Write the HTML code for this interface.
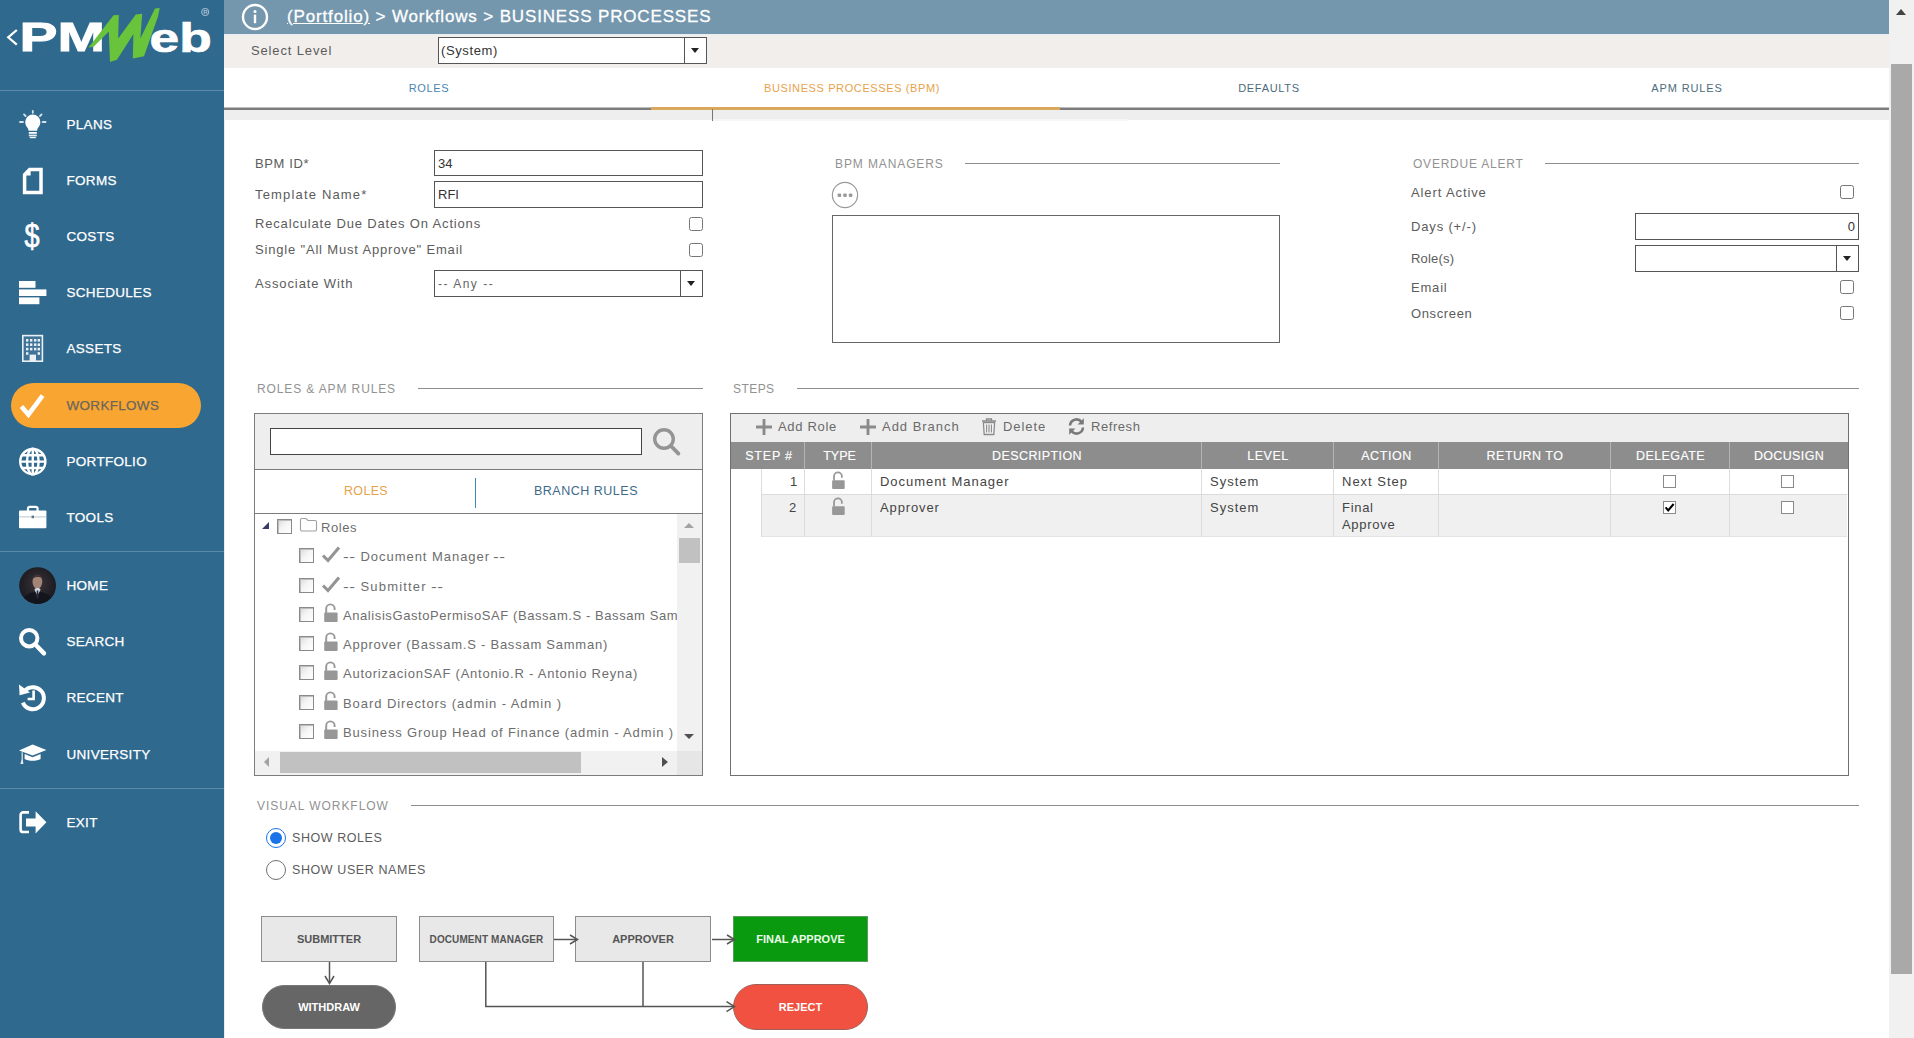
<!DOCTYPE html>
<html><head>
<meta charset="utf-8">
<title>PMWeb - Business Processes</title>
<style>
*{box-sizing:border-box;margin:0;padding:0}
html,body{width:1914px;height:1038px;overflow:hidden;background:#fff}
body{font-family:"Liberation Sans",sans-serif;font-size:13px;color:#5a5a5a;position:relative}
.abs{position:absolute}
#side{position:absolute;left:0;top:0;width:224px;height:1038px;background:#30698e}
.sep{position:absolute;left:0;width:224px;height:1px;background:#5d8aa8}
.nav{z-index:2;position:absolute;left:66.5px;-webkit-text-stroke:.25px #fff;color:#fff;font-size:13.5px;letter-spacing:.3px;line-height:16px;white-space:nowrap}
.ico{position:absolute;z-index:2}
#hdr{position:absolute;left:224px;top:0;width:1665px;height:34px;background:#7497ad;z-index:1;border-bottom:0}
#lvl{position:absolute;left:224px;top:33px;width:1665px;height:35px;background:#f1eeeb}
#tabs{position:absolute;left:224px;top:68px;width:1665px;height:42px;background:#fff}
.tab{position:absolute;top:82px;font-size:11px;letter-spacing:.75px;line-height:12px;white-space:nowrap;transform:translateX(calc(-50% + 1px))}
.lbl{position:absolute;font-size:13px;letter-spacing:.55px;line-height:16px;color:#5c5c5c;white-space:nowrap}
.sec{position:absolute;font-size:12px;letter-spacing:.75px;line-height:14px;color:#929292;white-space:nowrap}
.hr{position:absolute;height:1px;background:#8e8e8e}
.inp{position:absolute;border:1px solid #555;background:#fff;font-size:13px;color:#333;line-height:26px;padding-left:3px;white-space:nowrap;overflow:hidden}
.cb{position:absolute;width:14px;height:14px;border:1px solid #767676;border-radius:2.5px;background:#fff}
.dd{position:absolute;width:0;height:0;border-left:4.5px solid transparent;border-right:4.5px solid transparent;border-top:5px solid #222}

.tcb{position:absolute;width:15px;height:15px;border:1px solid #8a8a8a;background:linear-gradient(135deg,#d9d9d9 0%,#f4f4f4 45%,#fff 100%);box-shadow:inset 1px 1px 0 #bdbdbd}
.tl{position:absolute;font-size:13px;letter-spacing:.6px;line-height:16px;color:#6e6e6e;white-space:nowrap}

.tb{position:absolute;top:419px;font-size:13px;letter-spacing:.6px;line-height:16px;color:#6a6a6a;white-space:nowrap}
.th{-webkit-text-stroke:.15px #fff;position:absolute;top:449px;font-size:12.5px;letter-spacing:.45px;line-height:14px;color:#fff;white-space:nowrap;transform:translateX(calc(-50% + 1px))}
.td{position:absolute;font-size:13px;letter-spacing:.7px;line-height:17px;color:#444;white-space:nowrap}
.vl{position:absolute;width:1px}
.gcb{position:absolute;width:13px;height:13px;border:1px solid #8a8a8a;background:#fff}
.fb{position:absolute;border:1px solid #8c8c8c;background:#e8e8e8;font-size:10.5px;font-weight:bold;color:#555;text-align:center;white-space:nowrap}
.ds{transform:scaleX(1.33);transform-origin:0 50%;letter-spacing:.3px}
</style>
</head>
<body>

<!-- ================= SIDEBAR ================= -->
<div id="side">
  
  <!-- logo -->
  <svg class="abs" style="left:0;top:0" width="224" height="90" viewBox="0 0 224 90">
    <path d="M16.8 30 L8.2 37.3 L16.8 44.6" fill="none" stroke="#fff" stroke-width="2.2"></path>
    <text x="0" y="0" transform="translate(19.6,51.3) scale(1.39,1)" font-family="Liberation Sans" font-weight="bold" font-size="41" fill="#fff" stroke="#fff" stroke-width=".9">PM</text>
    <text x="0" y="0" transform="translate(149.5,51.6) scale(1.3,1)" font-family="Liberation Sans" font-weight="bold" font-size="41" fill="#fff" stroke="#fff" stroke-width=".7">eb</text>
    <path d="M88.6 47.4 L113.5 15.2 L118.8 15 L118.2 38.6 L135.8 14.6 L142.2 13.8 L140.4 38.6 L155 8.4 L159.7 8 L158 16.4 L144 56.2 L132.8 58.5 L133.4 34 L117 59.7 L110 62 L108.8 31.6 L93.6 46.8 Z" fill="#69c33b"></path>
    <circle cx="205.2" cy="12" r="3.6" fill="none" stroke="#a9c3d6" stroke-width="1"></circle>
    <text x="203.2" y="14.2" font-family="Liberation Sans" font-weight="bold" font-size="6" fill="#a9c3d6">R</text>
  </svg>
  <!-- plans: bulb -->
  <svg class="ico" style="left:17px;top:108px" width="32" height="32" viewBox="0 0 32 32">
    <path d="M15.8 6.6 a7.6 7.6 0 0 1 7.6 7.6 c0 3 -1.8 4.6 -2.8 6.4 l-0.6 2.2 h-8.4 l-0.6 -2.2 c-1 -1.8 -2.8 -3.4 -2.8 -6.4 a7.6 7.6 0 0 1 7.6 -7.6 z" fill="#fff"></path>
    <rect x="11.8" y="24" width="8" height="1.8" fill="#fff"></rect><rect x="11.8" y="26.6" width="8" height="1.8" fill="#e4ecf2"></rect><rect x="12.8" y="29" width="6" height="1.2" fill="#fff"></rect>
    <g stroke="#d5e3ee" stroke-width="1.8" stroke-linecap="round"><path d="M15.8 3 V4.8"></path><path d="M7 6.4 L8.6 8"></path><path d="M24.6 6.4 L23 8"></path><path d="M3 14 H6"></path><path d="M25.6 14 H28.6"></path></g>
  </svg>
  <!-- forms: doc -->
  <svg class="ico" style="left:20px;top:165px" width="26" height="32" viewBox="0 0 26 32">
    <path d="M9.6 4.6 H21 V27.4 H4.6 V9.8 Z" fill="none" stroke="#fff" stroke-width="3.5" stroke-linejoin="miter"></path>
    <path d="M4.6 10.6 H10.6 V4.6 Z" fill="#fff"></path>
  </svg>
  <!-- costs: $ -->
  <div class="ico" style="left:20px;top:216px;width:24px;color:#fff;font-size:33px;line-height:40px;font-weight:normal;text-align:center;-webkit-text-stroke:.7px #fff;transform:scaleX(.82)">$</div>
  <!-- schedules -->
  <svg class="ico" style="left:17px;top:278px" width="32" height="30" viewBox="0 0 32 30">
    <rect x="2" y="3" width="16.5" height="6.8" fill="#fff"></rect><rect x="2" y="11.4" width="27.4" height="6.6" fill="#fff"></rect><rect x="2" y="19.4" width="20.4" height="6.8" fill="#fff"></rect>
  </svg>
  <!-- assets: building -->
  <svg class="ico" style="left:20px;top:333px" width="26" height="30" viewBox="0 0 26 30">
    <rect x="2.8" y="2.6" width="19.6" height="25.6" fill="#3f7398" stroke="#e8f0f6" stroke-width="1.6"></rect>
    <g fill="#e8f0f6"><rect x="6" y="6" width="2.4" height="2.6"></rect><rect x="10" y="6" width="2.4" height="2.6"></rect><rect x="14" y="6" width="2.4" height="2.6"></rect><rect x="17.6" y="6" width="2.4" height="2.6"></rect>
    <rect x="6" y="10.4" width="2.4" height="2.6"></rect><rect x="10" y="10.4" width="2.4" height="2.6"></rect><rect x="14" y="10.4" width="2.4" height="2.6"></rect><rect x="17.6" y="10.4" width="2.4" height="2.6"></rect>
    <rect x="6" y="14.8" width="2.4" height="2.6"></rect><rect x="10" y="14.8" width="2.4" height="2.6"></rect><rect x="14" y="14.8" width="2.4" height="2.6"></rect><rect x="17.6" y="14.8" width="2.4" height="2.6"></rect>
    <rect x="6" y="19.2" width="2.4" height="2.6"></rect><rect x="17.6" y="19.2" width="2.4" height="2.6"></rect>
    <rect x="9.6" y="21.6" width="6.4" height="6.6"></rect></g>
  </svg>
  <!-- workflows: check -->
  <svg class="ico" style="left:17px;top:390px" width="32" height="32" viewBox="0 0 32 32">
    <path d="M4.4 16.6 L11.4 24.6 L25.6 5.6" fill="none" stroke="#fff" stroke-width="4.6" stroke-linejoin="miter"></path>
  </svg>
  <!-- portfolio: globe -->
  <svg class="ico" style="left:17px;top:446px" width="32" height="32" viewBox="0 0 32 32">
    <g fill="none" stroke="#fff" stroke-width="2.4"><circle cx="15.8" cy="15.6" r="12.6"></circle><ellipse cx="15.8" cy="15.6" rx="5.8" ry="12.8"></ellipse><path d="M15.8 2.8 V28.4 M3 15.6 H28.6 M5 9.2 H26.6 M5 22 H26.6"></path></g>
  </svg>
  <!-- tools: briefcase -->
  <svg class="ico" style="left:17px;top:503px" width="32" height="28" viewBox="0 0 32 28">
    <path d="M11 8 V5.6 a1.8 1.8 0 0 1 1.8 -1.8 h6 a1.8 1.8 0 0 1 1.8 1.8 V8" fill="none" stroke="#fff" stroke-width="2.2"></path>
    <rect x="2" y="7.6" width="27.4" height="17.6" rx="1" fill="#fff"></rect>
    <rect x="2" y="13.4" width="27.4" height="1" fill="#b9c6cf"></rect><rect x="14.6" y="12.6" width="2.4" height="2.6" fill="#5c7586"></rect>
  </svg>
  <!-- home avatar -->
  <svg class="ico" style="left:18px;top:566px" width="40" height="40" viewBox="0 0 40 40">
    <defs><clipPath id="av"><circle cx="19.6" cy="19.6" r="18.4"></circle></clipPath><radialGradient id="avg" cx="50%" cy="45%" r="60%"><stop offset="0" stop-color="#3a3338"></stop><stop offset="1" stop-color="#16171d"></stop></radialGradient></defs>
    <circle cx="19.6" cy="19.6" r="18.4" fill="url(#avg)"></circle>
    <g clip-path="url(#av)">
      <path d="M3 40 C5 28 12 26 19.6 26 C27 26 34 28 36 40 Z" fill="#14151c"></path>
      <ellipse cx="19.4" cy="15.8" rx="4.9" ry="7" fill="#a48474"></ellipse>
      <path d="M14.6 12.6 C15 7.6 23.6 7.4 24.2 12.4 C22 10.4 17 10.4 14.6 12.6 Z" fill="#3c3436"></path>
      <path d="M16.4 23.6 L19.4 30 L22.6 23.6 L21 22 H18 Z" fill="#cfd3da"></path>
      <path d="M18.8 24.6 H20.2 L20.8 31 L19.4 33 L18.2 31 Z" fill="#242a3c"></path>
    </g>
  </svg>
  <!-- search -->
  <svg class="ico" style="left:17px;top:626px" width="32" height="32" viewBox="0 0 32 32">
    <circle cx="12.2" cy="12.2" r="8.2" fill="none" stroke="#fff" stroke-width="4"></circle>
    <path d="M18.6 18.8 L27 27.4" stroke="#fff" stroke-width="4.4" stroke-linecap="round"></path>
  </svg>
  <!-- recent -->
  <svg class="ico" style="left:17px;top:681px" width="32" height="32" viewBox="0 0 32 32">
    <path d="M7.2 10.4 A11 11 0 1 1 5.8 21.6" fill="none" stroke="#fff" stroke-width="4"></path>
    <path d="M2 3.4 L2.6 14.2 L13 11.4 Z" fill="#fff"></path>
    <path d="M16.6 9.6 V18 H10.6" fill="none" stroke="#fff" stroke-width="2.6"></path>
  </svg>
  <!-- university -->
  <svg class="ico" style="left:17px;top:742px" width="32" height="26" viewBox="0 0 32 26">
    <path d="M15.6 2.6 L29.4 8 L15.6 13.6 L2 8.6 Z" fill="#fff"></path>
    <path d="M7.6 12 L15.6 15.2 L23.6 12 V17 C20 19.4 11 19.4 7.6 17 Z" fill="#fff"></path>
    <path d="M4.6 10 V17.4 L3.4 22 H6.4 L5.8 17.4 V10.6" fill="#e3ecf3"></path>
  </svg>
  <!-- exit -->
  <svg class="ico" style="left:17px;top:808px" width="32" height="30" viewBox="0 0 32 30">
    <path d="M12 4.4 H6.2 a2.6 2.6 0 0 0 -2.6 2.6 V21.4 a2.6 2.6 0 0 0 2.6 2.6 H12" fill="none" stroke="#fff" stroke-width="2.6"></path>
    <path d="M9 10.4 H18.6 V3.2 L29.4 14.2 L18.6 25.4 V18.4 H9 Z" fill="#fff"></path>
  </svg>
  <div class="sep" style="top:90px"></div>
  <div class="sep" style="top:551px"></div>
  <div class="sep" style="top:788px"></div>

  <div class="nav" style="top:117px">PLANS</div>
  <div class="nav" style="top:173px">FORMS</div>
  <div class="nav" style="top:229px">COSTS</div>
  <div class="nav" style="top:285px">SCHEDULES</div>
  <div class="nav" style="top:341px">ASSETS</div>
  <div class="abs" style="left:11px;top:383px;width:190px;height:45px;border-radius:23px;background:#f9a531"></div>
  <div class="nav" style="top:398px;color:#6b665c;-webkit-text-stroke:.25px #6b665c">WORKFLOWS</div>
  <div class="nav" style="top:454px">PORTFOLIO</div>
  <div class="nav" style="top:510px">TOOLS</div>
  <div class="nav" style="top:578px">HOME</div>
  <div class="nav" style="top:634px">SEARCH</div>
  <div class="nav" style="top:690px">RECENT</div>
  <div class="nav" style="top:747px">UNIVERSITY</div>
  <div class="nav" style="top:815px">EXIT</div>
</div>

<!-- ================= HEADER ================= -->
<div id="hdr">
  <svg class="abs" style="left:16px;top:2px" width="30" height="30" viewBox="0 0 30 30">
    <circle cx="15" cy="15" r="12" fill="none" stroke="#fff" stroke-width="2.4"></circle>
    <circle cx="15" cy="9.6" r="1.5" fill="#fff"></circle>
    <rect x="13.8" y="12.6" width="2.4" height="8.6" fill="#fff"></rect>
  </svg>
  <div class="abs bc" style="left: 63px; top: 6px; font-size: 17px; line-height: 22px; color: rgb(255, 255, 255); letter-spacing: 0.85px; white-space: nowrap; -webkit-text-stroke: 0.3px rgb(255, 255, 255);"><span style="text-decoration:underline">(Portfolio)</span> &gt; Workflows &gt; BUSINESS PROCESSES</div>
</div>
<div id="lvl">
  <div class="lbl" style="left: 27px; top: 10px; letter-spacing: 0.86px;">Select Level</div>
  <div class="inp" style="left: 214px; top: 4px; width: 269px; height: 27px; line-height: 25px; padding-left: 2px; letter-spacing: 0.61px;">(System)</div>
  <div class="abs" style="left:460px;top:5px;width:1px;height:25px;background:#555"></div>
  <div class="dd" style="left:466.5px;top:15px"></div>
</div>
<div class="abs" style="left:224px;top:34px;width:1665px;height:1px;background:#e6eff3;z-index:1"></div>
<div id="tabs">
  <div class="abs" style="left:0;top:39px;width:1665px;height:1px;background:#bdbdbd"></div><div class="abs" style="left:0;top:40px;width:1665px;height:2px;background:#7c7c7c"></div>
  <div class="abs" style="left:427px;top:39px;width:409px;height:3px;background:#d9a85a"></div>
</div>
<div class="tab" style="left: 428px; color: rgb(74, 134, 180); letter-spacing: 0.63px;">ROLES</div>
<div class="tab" style="left: 851px; color: rgb(232, 162, 74); letter-spacing: 0.61px;">BUSINESS PROCESSES (BPM)</div>
<div class="tab" style="left: 1268px; color: rgb(77, 107, 128); letter-spacing: 0.7px;">DEFAULTS</div>
<div class="tab" style="left: 1686px; color: rgb(77, 107, 128); letter-spacing: 0.87px;">APM RULES</div>
<div class="abs" style="left:224px;top:110px;width:1665px;height:10px;background:#eee"></div>
<div class="abs" style="left:712px;top:109px;width:1px;height:12px;background:#777"></div>
<div class="abs" style="left:713px;top:119px;width:415px;height:2px;background:#f6f6f6"></div>

<!-- ================= RIGHT SCROLLBAR ================= -->
<div class="abs" style="left:1889px;top:0;width:25px;height:1038px;background:#f1f1f1"></div>
<div class="abs" style="left:1891px;top:64px;width:21px;height:910px;background:#a9a9a9"></div>
<div class="abs" style="left:1896px;top:9px;width:0;height:0;border-left:5.5px solid transparent;border-right:5.5px solid transparent;border-bottom:6px solid #444"></div>

<div class="abs" style="left:224px;top:120px;width:1px;height:918px;background:#e6eef3"></div>
<!-- ================= FORM LEFT ================= -->
<div class="lbl" style="left: 255px; top: 156px; letter-spacing: 0.63px;">BPM ID*</div>
<div class="inp" style="left:434px;top:150px;width:269px;height:26px">34</div>
<div class="lbl" style="left: 255px; top: 187px; letter-spacing: 1.17px;">Template Name*</div>
<div class="inp" style="left:434px;top:181px;width:269px;height:27px">RFI</div>
<div class="lbl" style="left: 255px; top: 216px; letter-spacing: 0.83px;">Recalculate Due Dates On Actions</div>
<div class="cb" style="left:689px;top:217px"></div>
<div class="lbl" style="left: 255px; top: 242px; letter-spacing: 0.82px;">Single "All Must Approve" Email</div>
<div class="cb" style="left:689px;top:243px"></div>
<div class="lbl" style="left: 255px; top: 276px; letter-spacing: 0.89px;">Associate With</div>
<div class="inp" style="left: 434px; top: 270px; width: 269px; height: 27px; color: rgb(102, 102, 102); font-size: 12px; letter-spacing: 1.5px;">-- Any --</div>
<div class="abs" style="left:680px;top:271px;width:1px;height:25px;background:#555"></div>
<div class="dd" style="left:687px;top:281px"></div>

<!-- ================= BPM MANAGERS ================= -->
<div class="sec" style="left: 835px; top: 157px; letter-spacing: 0.89px;">BPM MANAGERS</div>
<div class="hr" style="left:965px;top:163px;width:315px"></div>
<svg class="abs" style="left:831px;top:181px" width="28" height="28" viewBox="0 0 28 28">
  <circle cx="14" cy="14" r="12.6" fill="#fff" stroke="#9a9a9a" stroke-width="1.2"></circle>
  <rect x="6.6" y="12.4" width="3.6" height="3.6" rx="1" fill="#9a9a9a"></rect>
  <rect x="12.2" y="12.4" width="3.6" height="3.6" rx="1" fill="#9a9a9a"></rect>
  <rect x="17.8" y="12.4" width="3.6" height="3.6" rx="1" fill="#9a9a9a"></rect>
</svg>
<div class="abs" style="left:832px;top:215px;width:448px;height:128px;border:1px solid #666;background:#fff"></div>

<!-- ================= OVERDUE ALERT ================= -->
<div class="sec" style="left: 1413px; top: 157px; letter-spacing: 0.77px;">OVERDUE ALERT</div>
<div class="hr" style="left:1545px;top:163px;width:314px"></div>
<div class="lbl" style="left: 1411px; top: 185px; letter-spacing: 0.89px;">Alert Active</div>
<div class="cb" style="left:1840px;top:185px"></div>
<div class="lbl" style="left: 1411px; top: 219px; letter-spacing: 0.84px;">Days (+/-)</div>
<div class="inp" style="left:1635px;top:213px;width:224px;height:27px;text-align:right;padding-right:3px">0</div>
<div class="lbl" style="left: 1411px; top: 251px; letter-spacing: 0.18px;">Role(s)</div>
<div class="inp" style="left:1635px;top:245px;width:224px;height:27px"></div>
<div class="abs" style="left:1836px;top:246px;width:1px;height:25px;background:#555"></div>
<div class="dd" style="left:1843px;top:256px"></div>
<div class="lbl" style="left: 1411px; top: 280px; letter-spacing: 0.8px;">Email</div>
<div class="cb" style="left:1840px;top:280px"></div>
<div class="lbl" style="left: 1411px; top: 306px; letter-spacing: 0.63px;">Onscreen</div>
<div class="cb" style="left:1840px;top:306px"></div>

<!-- ================= ROLES & APM RULES ================= -->
<div class="sec" style="left: 257px; top: 382px; letter-spacing: 0.88px;">ROLES &amp; APM RULES</div>
<div class="hr" style="left:418px;top:388px;width:285px"></div>
<div class="abs" style="left:254px;top:413px;width:449px;height:363px;border:1px solid #7c7c7c;background:#fff"></div>
<div class="abs" style="left:255px;top:414px;width:447px;height:55px;background:#eee"></div>
<div class="abs" style="left:255px;top:469px;width:447px;height:1px;background:#7c7c7c"></div>
<div class="abs" style="left:270px;top:428px;width:372px;height:27px;border:1px solid #444;background:#fff"></div>
<svg class="abs" style="left:650px;top:425px" width="34" height="34" viewBox="0 0 34 34">
  <circle cx="14" cy="14" r="9.3" fill="none" stroke="#949494" stroke-width="3.4"></circle>
  <line x1="21" y1="21" x2="28.4" y2="28.6" stroke="#949494" stroke-width="3.8" stroke-linecap="round"></line>
</svg>
<div class="abs" style="left:255px;top:513px;width:447px;height:1px;background:#7c7c7c"></div>
<div class="abs" style="left:475px;top:478px;width:1px;height:30px;background:#3f86b8"></div>
<div class="tab" style="left: 365px; top: 484px; font-size: 12.5px; letter-spacing: 0.33px; line-height: 14px; color: rgb(232, 162, 74);">ROLES</div>
<div class="tab" style="left: 585px; top: 484px; font-size: 12.5px; letter-spacing: 0.51px; line-height: 14px; color: rgb(61, 106, 138);">BRANCH RULES</div>
<div class="abs" style="left:255px;top:514px;width:422px;height:237px;overflow:hidden">
<div class="abs" style="left:7px;top:8px;width:0;height:0;border-left:7px solid transparent;border-bottom:7px solid #3b3b6b"></div>
<div class="tcb" style="left:22px;top:5px"></div>
<svg class="abs" style="left:44px;top:3px" width="19" height="16" viewBox="0 0 19 16"><path d="M1.5 3 a1.5 1.5 0 0 1 1.5 -1.5 h4 l2 2 h7 a1.5 1.5 0 0 1 1.5 1.5 v7.5 a1.5 1.5 0 0 1 -1.5 1.5 h-13 a1.5 1.5 0 0 1 -1.5 -1.5 z" fill="#fff" stroke="#a0a0a0" stroke-width="1.1"></path></svg>
<div class="tl" style="left: 66px; top: 6px; letter-spacing: 0.54px;">Roles</div>
<div class="tcb" style="left:44px;top:34px"></div>
<svg class="abs" style="left:66px;top:31px" width="20" height="18" viewBox="0 0 20 18"><path d="M2 10.5 L7 15.5 L18 2.5" fill="none" stroke="#949494" stroke-width="3.1" stroke-linejoin="miter"></path></svg>
<div class="tl ds" style="left: 87.5px; top: 35px;">--</div><div class="tl" style="left: 105.5px; top: 35px; letter-spacing: 0.96px;">Document Manager</div><div class="tl ds" style="left: 238.3px; top: 35px;">--</div>
<div class="tcb" style="left:44px;top:64px"></div>
<svg class="abs" style="left:66px;top:61px" width="20" height="18" viewBox="0 0 20 18"><path d="M2 10.5 L7 15.5 L18 2.5" fill="none" stroke="#949494" stroke-width="3.1" stroke-linejoin="miter"></path></svg>
<div class="tl ds" style="left: 87.5px; top: 65px;">--</div><div class="tl" style="left: 105.5px; top: 65px; letter-spacing: 1.17px;">Submitter</div><div class="tl ds" style="left: 176.4px; top: 65px;">--</div>
<div class="tcb" style="left:44px;top:93px"></div>
<svg class="abs" style="left:68px;top:89px" width="16" height="20" viewBox="0 0 16 20"><path d="M3.2 10 V5.6 a4.2 4.2 0 0 1 8.4 0 V7" fill="none" stroke="#979797" stroke-width="1.9"></path><rect x="1.2" y="9.6" width="13.4" height="9.4" rx="1" fill="#979797"></rect></svg>
<div class="tl" style="left: 88px; top: 94px; letter-spacing: 0.58px;">AnalisisGastoPermisoSAF (Bassam.S - Bassam Samman)</div>
<div class="tcb" style="left:44px;top:122px"></div>
<svg class="abs" style="left:68px;top:118px" width="16" height="20" viewBox="0 0 16 20"><path d="M3.2 10 V5.6 a4.2 4.2 0 0 1 8.4 0 V7" fill="none" stroke="#979797" stroke-width="1.9"></path><rect x="1.2" y="9.6" width="13.4" height="9.4" rx="1" fill="#979797"></rect></svg>
<div class="tl" style="left: 88px; top: 123px; letter-spacing: 0.76px;">Approver (Bassam.S - Bassam Samman)</div>
<div class="tcb" style="left:44px;top:151px"></div>
<svg class="abs" style="left:68px;top:147px" width="16" height="20" viewBox="0 0 16 20"><path d="M3.2 10 V5.6 a4.2 4.2 0 0 1 8.4 0 V7" fill="none" stroke="#979797" stroke-width="1.9"></path><rect x="1.2" y="9.6" width="13.4" height="9.4" rx="1" fill="#979797"></rect></svg>
<div class="tl" style="left: 88px; top: 152px; letter-spacing: 0.76px;">AutorizacionSAF (Antonio.R - Antonio Reyna)</div>
<div class="tcb" style="left:44px;top:181px"></div>
<svg class="abs" style="left:68px;top:177px" width="16" height="20" viewBox="0 0 16 20"><path d="M3.2 10 V5.6 a4.2 4.2 0 0 1 8.4 0 V7" fill="none" stroke="#979797" stroke-width="1.9"></path><rect x="1.2" y="9.6" width="13.4" height="9.4" rx="1" fill="#979797"></rect></svg>
<div class="tl" style="left: 88px; top: 182px; letter-spacing: 0.93px;">Board Directors (admin - Admin )</div>
<div class="tcb" style="left:44px;top:210px"></div>
<svg class="abs" style="left:68px;top:206px" width="16" height="20" viewBox="0 0 16 20"><path d="M3.2 10 V5.6 a4.2 4.2 0 0 1 8.4 0 V7" fill="none" stroke="#979797" stroke-width="1.9"></path><rect x="1.2" y="9.6" width="13.4" height="9.4" rx="1" fill="#979797"></rect></svg>
<div class="tl" style="left: 88px; top: 211px; letter-spacing: 0.86px;">Business Group Head of Finance (admin - Admin )</div>
</div>
<div class="abs" style="left:677px;top:514px;width:25px;height:237px;background:#f1f1f1"></div>
<div class="abs" style="left:679px;top:538px;width:21px;height:25px;background:#c1c1c1"></div>
<div class="abs" style="left:684px;top:523px;width:0;height:0;border-left:5px solid transparent;border-right:5px solid transparent;border-bottom:5px solid #a3a3a3"></div>
<div class="abs" style="left:684px;top:734px;width:0;height:0;border-left:5px solid transparent;border-right:5px solid transparent;border-top:5px solid #505050"></div>
<div class="abs" style="left:255px;top:751px;width:447px;height:24px;background:#f1f1f1"></div>
<div class="abs" style="left:677px;top:751px;width:25px;height:24px;background:#e6e6e6"></div>
<div class="abs" style="left:280px;top:752px;width:301px;height:21px;background:#c1c1c1"></div>
<div class="abs" style="left:264px;top:757px;width:0;height:0;border-top:5px solid transparent;border-bottom:5px solid transparent;border-right:5px solid #a3a3a3"></div>
<div class="abs" style="left:662px;top:757px;width:0;height:0;border-top:5px solid transparent;border-bottom:5px solid transparent;border-left:6px solid #505050"></div>

<!-- ================= STEPS ================= -->
<div class="sec" style="left: 733px; top: 382px; letter-spacing: 0.44px;">STEPS</div>
<div class="hr" style="left:797px;top:388px;width:1062px"></div>
<div class="abs" style="left:730px;top:413px;width:1119px;height:363px;border:1px solid #707070;background:#fff"></div>
<div class="abs" style="left:731px;top:414px;width:1117px;height:28px;background:#eee"></div>
<svg class="abs" style="left:755px;top:418px" width="18" height="18" viewBox="0 0 18 18"><path d="M9 1 V17 M1 9 H17" stroke="#8a8a8a" stroke-width="2.9" fill="none"></path></svg>
<div class="tb" style="left: 778px; letter-spacing: 0.69px;">Add Role</div>
<svg class="abs" style="left:859px;top:418px" width="18" height="18" viewBox="0 0 18 18"><path d="M9 1 V17 M1 9 H17" stroke="#8a8a8a" stroke-width="2.9" fill="none"></path></svg>
<div class="tb" style="left: 882px; letter-spacing: 0.98px;">Add Branch</div>
<svg class="abs" style="left:980px;top:417px" width="18" height="19" viewBox="0 0 18 19"><path d="M2 4 H16 M6.5 4 V2 H11.5 V4" fill="none" stroke="#8a8a8a" stroke-width="1.3"></path><path d="M3.4 5.5 H14.6 L13.8 17.5 H4.2 Z" fill="#f4f4f4" stroke="#8a8a8a" stroke-width="1.3"></path><path d="M6.6 7.5 V15.5 M9 7.5 V15.5 M11.4 7.5 V15.5" stroke="#8a8a8a" stroke-width="1.1"></path></svg>
<div class="tb" style="left: 1003px; letter-spacing: 0.94px;">Delete</div>
<svg class="abs" style="left:1067px;top:417px" width="19" height="19" viewBox="0 0 19 19"><path d="M3 8.5 A6.5 6.5 0 0 1 14.6 5" fill="none" stroke="#7a7a7a" stroke-width="2.6"></path><path d="M16.8 1.2 V7.4 H10.6 Z" fill="#7a7a7a"></path><path d="M16 10.5 A6.5 6.5 0 0 1 4.4 14" fill="none" stroke="#7a7a7a" stroke-width="2.6"></path><path d="M2.2 17.8 V11.6 H8.4 Z" fill="#7a7a7a"></path></svg>
<div class="tb" style="left: 1091px; letter-spacing: 0.56px;">Refresh</div>
<div class="abs" style="left:731px;top:442px;width:1117px;height:27px;background:#8d8d8d"></div>
<div class="th" style="left: 768px; letter-spacing: 0.77px;">STEP #</div>
<div class="th" style="left: 838.5px; letter-spacing: -0.02px;">TYPE</div>
<div class="th" style="left: 1036px; letter-spacing: 0.42px;">DESCRIPTION</div>
<div class="th" style="left: 1267px; letter-spacing: 0.53px;">LEVEL</div>
<div class="th" style="left: 1385.5px; letter-spacing: 0.55px;">ACTION</div>
<div class="th" style="left: 1524px; letter-spacing: 0.48px;">RETURN TO</div>
<div class="th" style="left: 1669.5px; letter-spacing: 0.4px;">DELEGATE</div>
<div class="th" style="left: 1788px; letter-spacing: 0.36px;">DOCUSIGN</div>
<div class="vl" style="left:804px;top:442px;height:27px;background:#b4b4b4"></div>
<div class="vl" style="left:871px;top:442px;height:27px;background:#b4b4b4"></div>
<div class="vl" style="left:1201px;top:442px;height:27px;background:#b4b4b4"></div>
<div class="vl" style="left:1333px;top:442px;height:27px;background:#b4b4b4"></div>
<div class="vl" style="left:1438px;top:442px;height:27px;background:#b4b4b4"></div>
<div class="vl" style="left:1610px;top:442px;height:27px;background:#b4b4b4"></div>
<div class="vl" style="left:1729px;top:442px;height:27px;background:#b4b4b4"></div>
<div class="abs" style="left:761px;top:469px;width:1086px;height:26px;background:#fff"></div>
<div class="abs" style="left:761px;top:495px;width:1086px;height:42px;background:#f0f0f0"></div>
<div class="abs" style="left:761px;top:494px;width:1086px;height:1px;background:#dcdcdc"></div>
<div class="abs" style="left:761px;top:536px;width:1086px;height:1px;background:#e4e4e4"></div>
<div class="vl" style="left:761px;top:469px;height:68px;background:#dcdcdc"></div>
<div class="vl" style="left:804px;top:469px;height:68px;background:#dcdcdc"></div>
<div class="vl" style="left:871px;top:469px;height:68px;background:#dcdcdc"></div>
<div class="vl" style="left:1201px;top:469px;height:68px;background:#dcdcdc"></div>
<div class="vl" style="left:1333px;top:469px;height:68px;background:#dcdcdc"></div>
<div class="vl" style="left:1438px;top:469px;height:68px;background:#dcdcdc"></div>
<div class="vl" style="left:1610px;top:469px;height:68px;background:#dcdcdc"></div>
<div class="vl" style="left:1729px;top:469px;height:68px;background:#dcdcdc"></div>
<div class="td" style="left:790px;top:473px">1</div>
<div class="td" style="left:789px;top:499px">2</div>
<svg class="abs" style="left:831px;top:471px" width="15" height="19" viewBox="0 0 16 20"><path d="M3.2 10 V5.6 a4.2 4.2 0 0 1 8.4 0 V7" fill="none" stroke="#979797" stroke-width="1.9"></path><rect x="1.2" y="9.6" width="13.4" height="9.4" rx="1" fill="#979797"></rect></svg>
<svg class="abs" style="left:831px;top:497px" width="15" height="19" viewBox="0 0 16 20"><path d="M3.2 10 V5.6 a4.2 4.2 0 0 1 8.4 0 V7" fill="none" stroke="#979797" stroke-width="1.9"></path><rect x="1.2" y="9.6" width="13.4" height="9.4" rx="1" fill="#979797"></rect></svg>
<div class="td" style="left: 880px; top: 473px; letter-spacing: 0.96px;">Document Manager</div>
<div class="td" style="left: 880px; top: 499px; letter-spacing: 0.88px;">Approver</div>
<div class="td" style="left: 1210px; top: 473px; letter-spacing: 0.99px;">System</div>
<div class="td" style="left: 1210px; top: 499px; letter-spacing: 0.99px;">System</div>
<div class="td" style="left: 1342px; top: 473px; letter-spacing: 1px;">Next Step</div>
<div class="td" style="left:1342px;top:499px">Final<br>Approve</div>
<div class="gcb" style="left:1663px;top:475px"></div>
<div class="gcb" style="left:1781px;top:475px"></div>
<div class="gcb" style="left:1663px;top:501px"></div>
<svg class="abs" style="left:1664px;top:502px" width="11" height="11" viewBox="0 0 11 11"><path d="M1.6 5.4 L4.2 8.4 L9.6 2" fill="none" stroke="#000" stroke-width="2.1"></path></svg>
<div class="gcb" style="left:1781px;top:501px"></div>

<!-- ================= VISUAL WORKFLOW ================= -->
<div class="sec" style="left: 257px; top: 799px; letter-spacing: 0.95px;">VISUAL WORKFLOW</div>
<div class="hr" style="left:411px;top:805px;width:1448px"></div>
<div class="abs" style="left:266px;top:828px;width:20px;height:20px;border-radius:50%;border:1.5px solid #1a73e8;background:#fff"></div>
<div class="abs" style="left:270px;top:832px;width:12px;height:12px;border-radius:50%;background:#1a73e8"></div>
<div class="abs" style="left:266px;top:860px;width:20px;height:20px;border-radius:50%;border:1.3px solid #707070;background:#fff"></div>
<div class="lbl" style="left: 292px; top: 830px; font-size: 12.5px; letter-spacing: 0.57px;">SHOW ROLES</div>
<div class="lbl" style="left: 292px; top: 862px; font-size: 12.5px; letter-spacing: 0.59px;">SHOW USER NAMES</div>
<div class="fb" style="left:261px;top:916px;width:136px;height:46px;line-height:44px;font-size:11px">SUBMITTER</div>
<div class="fb" style="left:419px;top:916px;width:135px;height:46px;line-height:46px;font-size:10px;letter-spacing:.1px">DOCUMENT MANAGER</div>
<div class="fb" style="left:575px;top:916px;width:136px;height:46px;line-height:44px;font-size:11px">APPROVER</div>
<div class="fb" style="left:733px;top:916px;width:135px;height:46px;line-height:44px;font-size:11px;background:#0a9a0f;border-color:#5a9a5a;color:#eaffea">FINAL APPROVE</div>
<div class="fb" style="left:262px;top:985px;width:134px;height:44px;line-height:42px;font-size:11px;background:#666;border-color:#777;border-radius:22px;color:#fff">WITHDRAW</div>
<div class="fb" style="left:733px;top:984px;width:135px;height:46px;line-height:44px;font-size:11px;background:#f05140;border-color:#a06058;border-radius:23px;color:#fff">REJECT</div>
<svg class="abs" style="left:250px;top:900px" width="640" height="138" viewBox="0 0 640 138">
<g fill="none" stroke="#555" stroke-width="1.5">
<path d="M79.5 62 V83"></path><path d="M75 76 L79.5 83.5 L84 76"></path>
<path d="M304 39.5 H327"></path><path d="M320 35 L327.5 39.5 L320 44"></path>
<path d="M462 39.5 H484"></path><path d="M477 35 L484.5 39.5 L477 44"></path>
<path d="M235.8 62 V106.6 H484"></path><path d="M393 62 V106.6"></path><path d="M476.5 101.6 L484.5 106.6 L476.5 111.6"></path>
</g></svg>



</body></html>
